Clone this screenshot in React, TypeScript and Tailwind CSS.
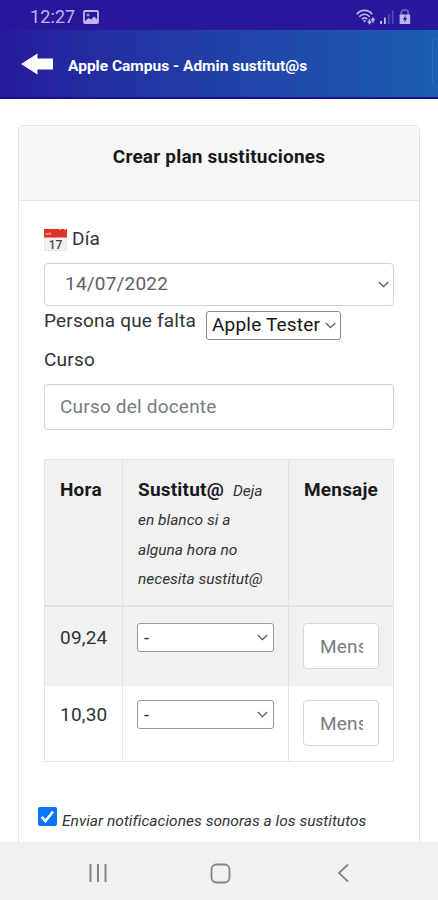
import React from 'react';

interface Slot {
  hour: string;
  rowClass: string;
}

const slots: Slot[] = [
  { hour: '09,24', rowClass: 'h-[79px] bg-[#f1f1f1] pt-[16px]' },
  { hour: '10,30', rowClass: 'h-[75px] bg-white pt-[14px]' },
];

const Chevron = () => (
  <svg width="11" height="7" viewBox="0 0 11 7" fill="none" stroke="#555" strokeWidth="1.2">
    <path d="M0.8 1 5.5 5.6 10.2 1" />
  </svg>
);

const StatusBar = () => (
  <div className="h-[30px] bg-[#28179a] flex items-center pl-[30px] pr-[27px] pt-[3px] text-[#bcb8ee]">
    <span className="text-[18px] leading-none tracking-[0.1px]">12:27</span>
    <svg className="ml-[8px]" width="16" height="14" viewBox="0 0 16 14">
      <rect x="1" y="1" width="14" height="12" rx="1" fill="none" stroke="currentColor" strokeWidth="1.8" />
      <path d="M2 11 5.5 8 8 9.5 11 6.5 14 9V12H2z" fill="currentColor" />
      <path d="M3.5 5h3M5 3.5v3" stroke="currentColor" strokeWidth="1" />
    </svg>
    <svg className="ml-auto" width="20" height="16" viewBox="0 0 20 16" fill="none" stroke="currentColor">
      <path d="M0.8 5.2C5 .2 12 .2 16.2 5.2" strokeWidth="1.7" />
      <path d="M3.3 7.8c3-3.4 7.4-3.4 10.4 0" strokeWidth="1.7" />
      <path d="M5.8 10.2c1.8-1.9 3.6-1.9 5.4 0" strokeWidth="1.7" />
      <path d="M6.8 11.3h3.4L8.5 13.8z" fill="currentColor" stroke="none" />
      <path d="M13.5 14.5V10M11.8 12.4l1.7 2.2 1.7-2.2M17 13.8V9.5M15.4 11.4 17 9.2l1.6 2.2" strokeWidth="1.4" />
    </svg>
    <svg className="ml-[3px]" width="15" height="15" viewBox="0 0 15 15" fill="currentColor">
      <rect x="1" y="12" width="2" height="3" />
      <rect x="5" y="8.5" width="1.8" height="6.5" />
      <rect x="9" y="5" width="1.8" height="10" opacity="0.3" />
      <rect x="12.8" y="1.5" width="1.8" height="13.5" opacity="0.3" />
    </svg>
    <svg className="ml-[5px]" width="12" height="15" viewBox="0 0 12 15">
      <path d="M2.3 6V3.5C2.3 0 9.3 0 9.3 3.5V6" fill="none" stroke="currentColor" strokeWidth="1.8" opacity="0.45" />
      <rect x="0.6" y="5.5" width="10.6" height="9.5" rx="0.8" fill="currentColor" />
      <path d="M6.8 5.8 3.8 10.4h2L5.2 13.8 8.2 9H6.3z" fill="#28179a" />
    </svg>
  </div>
);

const AppHeader = () => (
  <header className="h-[69px] flex items-center pl-[21px] border-b-2 border-[#160f90] bg-linear-to-r from-[#251a9c] via-[#2140a8] to-[#1b5eb0]">
    <svg width="33" height="22" viewBox="0 0 33 22" fill="#fff" className="mt-px shrink-0">
      <path d="M0 11 16.5 0.5V5.5H32V16.5H16.5V21.5z" />
    </svg>
    <h1 className="ml-[14px] mt-[6px] text-[15.5px] font-bold text-white whitespace-nowrap">
      Apple Campus - Admin sustitut@s
    </h1>
    <div className="ml-auto -mr-1 -mt-[2px] h-[49px] w-[10px] rounded-l-sm border border-[#2a6cb6]" />
  </header>
);

const CalendarIcon = () => (
  <svg width="23" height="23" viewBox="0 0 23 23">
    <rect x="0.5" y="1" width="22" height="21.5" fill="#f1f1f1" stroke="#dedede" strokeWidth="0.6" />
    <path d="M0 1h15l1 1.2L17 1h3l1 1.2L22 1h1v8.5H0z" fill="#df3328" />
    <path d="M2 7V5.5h1.5V7M5 7V5h1.5v2" stroke="#f3a39d" fill="none" />
    <text x="11.5" y="20.5" textAnchor="middle" fontSize="12" fontWeight="500" letterSpacing="0" fontFamily="Roboto, sans-serif" fill="#444">17</text>
  </svg>
);

const SlotRow = ({ hour, rowClass }: Slot) => (
  <div className="flex border-x border-[#e1e2e3]">
    <div className={`w-[78px] shrink-0 pl-[15px] border-r border-[#e1e2e3] ${rowClass}`}>
      <span className="block leading-[30px]">{hour}</span>
    </div>
    <div className={`w-[166px] shrink-0 pl-[14px] border-r border-[#e1e2e3] ${rowClass}`}>
      <div className="flex h-[29px] w-[137px] items-center justify-between rounded-[3px] border border-[#999] bg-white pl-[6px] pr-[5px] text-[18px]">
        <span>-</span>
        <Chevron />
      </div>
    </div>
    <div className={`flex-1 pl-[14px] ${rowClass}`}>
      <div className="h-[46px] w-[76px] rounded border border-[#d3d7da] bg-white pl-[16px] pr-[15px] text-[#777c81]">
        <span className="block overflow-hidden whitespace-nowrap leading-[45px]">Mensaje</span>
      </div>
    </div>
  </div>
);

const NavBar = () => (
  <nav className="h-[58px] shrink-0 flex items-center bg-[#f1f1f1] text-[#858585] pt-[4px]">
    <svg className="ml-[88px]" width="20" height="20" viewBox="0 0 20 20" stroke="currentColor" strokeWidth="2">
      <path d="M2.5 1v18M10 1v18M17.5 1v18" />
    </svg>
    <svg className="ml-[102px]" width="21" height="21" viewBox="0 0 21 21" fill="none" stroke="currentColor" strokeWidth="1.8">
      <rect x="1.5" y="1.5" width="18" height="18" rx="5" />
    </svg>
    <svg className="ml-[106px]" width="12" height="20" viewBox="0 0 12 20" fill="none" stroke="currentColor" strokeWidth="1.8">
      <path d="M11 1.5 2 10l9 8.5" />
    </svg>
  </nav>
);

export default function App() {
  return (
    <div className="flex h-[900px] w-[438px] flex-col overflow-hidden bg-white font-[Roboto,sans-serif] text-[#303336]">
      <StatusBar />
      <AppHeader />

      <main className="flex-1 overflow-hidden pt-[26px] pl-[18px]">
        <section className="h-[730px] w-[402px] rounded-t-[5px] border border-[#e2e2e2]">
          <div className="h-[75px] rounded-t border-b border-[#e6e6e6] bg-[#f7f7f7] pt-[16px] text-center">
            <h2 className="text-[19px] leading-[30px] font-bold tracking-[0.2px] text-[#17191b]">Crear plan sustituciones</h2>
          </div>

          <div className="px-[25px] pt-[23px] text-[19px] tracking-[0.2px]">
            <div className="flex h-[31px] items-center gap-[5px]">
              <CalendarIcon />
              <span>Día</span>
            </div>
            <div className="mt-[8px] flex h-[43px] items-center justify-between rounded border border-[#d0d3d6] pl-[20px] pr-[4px] text-[#5b6066]">
              <span>14/07/2022</span>
              <Chevron />
            </div>

            <div className="flex h-[39px]">
              <span className="w-[162px] leading-[29px] whitespace-nowrap">Persona que falta</span>
              <div className="mt-[5px] flex h-[29px] w-[135px] items-center justify-between rounded-[3px] border border-[#8c8c8c] pl-[5px] pr-[4px] text-[#151515] whitespace-nowrap">
                <span>Apple Tester</span>
                <Chevron />
              </div>
            </div>
            <span className="block leading-[30px]">Curso</span>
            <div className="mt-[9px] flex h-[46px] items-center rounded border border-[#d0d3d6] pl-[15px] text-[#777c81]">
              Curso del docente
            </div>

            <div className="mt-[29px] border-b border-[#e1e2e3]">
              <div className="flex h-[148px] border border-b-2 border-[#e1e2e3] bg-[#f1f1f1] leading-[29.3px]">
                <div className="w-[78px] shrink-0 border-r border-[#e1e2e3] pl-[15px] pt-[15px] font-bold text-[#17191b]">Hora</div>
                <div className="w-[166px] shrink-0 border-r border-[#e1e2e3] pl-[15px] pt-[15px] whitespace-nowrap">
                  <b className="text-[#17191b]">Sustitut@</b>
                  <i className="ml-[9px] text-[15.5px] tracking-normal">Deja</i>
                  <i className="block text-[15.5px] tracking-normal">en blanco si a</i>
                  <i className="block text-[15.5px] tracking-normal">alguna hora no</i>
                  <i className="block text-[15.5px] tracking-normal">necesita sustitut@</i>
                </div>
                <div className="pl-[15px] pt-[15px] font-bold text-[#17191b]">Mensaje</div>
              </div>
              {slots.map((slot) => (
                <SlotRow key={slot.hour} {...slot} />
              ))}
            </div>

            <div className="mt-[45px] -ml-[6px] flex items-start">
              <div className="flex size-[19px] shrink-0 items-center justify-center rounded-[2px] bg-[#0b75f5]">
                <svg width="15" height="15" viewBox="0 0 15 15" fill="none" stroke="#fff" strokeWidth="2.6">
                  <path d="M1.5 8 5.5 12 13 2.5" />
                </svg>
              </div>
              <i className="ml-[5px] text-[15.5px] leading-[29px] tracking-[0.02px] whitespace-nowrap">
                Enviar notificaciones sonoras a los sustitutos
              </i>
            </div>
          </div>
        </section>
      </main>

      <NavBar />
    </div>
  );
}
